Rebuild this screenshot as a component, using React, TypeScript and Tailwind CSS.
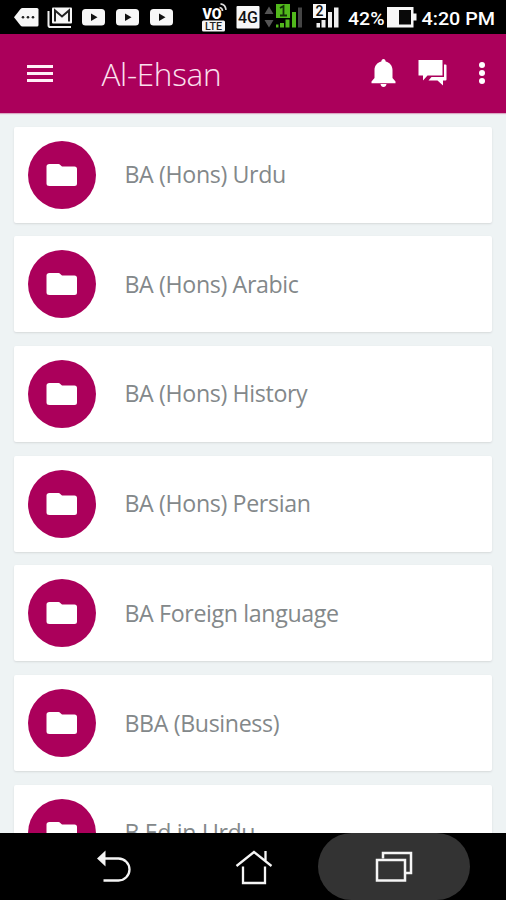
const courses = [
  "BA (Hons) Urdu",
  "BA (Hons) Arabic",
  "BA (Hons) History",
  "BA (Hons) Persian",
  "BA Foreign language",
  "BBA (Business)",
  "B.Ed in Urdu",
];

const VideoIcon = () => (
  <svg className="w-[34px] shrink-0" height="34" viewBox="0 0 34 34">
    <rect x="0" y="9" width="23" height="16.5" rx="3.5" fill="#f7f7f7" />
    <path d="M9 13.5v7.5l6.5-3.75z" fill="#111" />
  </svg>
);

const StatusBar = () => (
  <div className="flex h-[34px] shrink-0 items-center bg-black font-[Roboto,sans-serif] text-white">
    <svg className="ml-[13px] shrink-0" width="26" height="34" viewBox="0 0 26 34">
      <path d="M1 17.2 7.5 9q.8-1 2-1H24q1.500 0 1.500 1.500v15.500q0 1.500-1.500 1.500H9.500q-1.200 0-2-1z" fill="#f7f7f7" />
      <g fill="#222">
        <circle cx="10" cy="17.300" r="1.300" />
        <circle cx="15" cy="17.300" r="1.300" />
        <circle cx="20" cy="17.300" r="1.300" />
      </g>
    </svg>
    <svg className="ml-2 shrink-0" width="26" height="34" viewBox="0 0 26 34" fill="none">
      <path d="M1.500 11v14.200q0 1.800 1.800 1.800H24" stroke="#eee" strokeWidth="2" />
      <rect x="5" y="7.500" width="20" height="16" rx="1" fill="#f7f7f7" />
      <path d="M8 21.500V10.500l7 6 7-6v11" stroke="#222" strokeWidth="2" />
    </svg>
    <div className="ml-[9px] flex">
      <VideoIcon />
      <VideoIcon />
      <VideoIcon />
    </div>
    <svg className="ml-[17px] shrink-0" width="28" height="34" viewBox="0 0 28 34">
      <text x="1.500" y="18.500" fill="#fff" fontSize="14" fontWeight="900" textLength="19" lengthAdjust="spacingAndGlyphs">VO</text>
      <path d="M18.500 7.500q3 .5 3 3.500M19.500 3.800q5 .7 5.500 6" fill="none" stroke="#ddd" strokeWidth="1.700" />
      <rect x="1" y="20.500" width="23" height="11" rx="1.500" fill="#f5f5f5" />
      <text x="4" y="29.700" fill="#222" fontSize="10" fontWeight="500" textLength="17" lengthAdjust="spacingAndGlyphs">LTE</text>
    </svg>
    <svg className="ml-[7px] shrink-0" width="24" height="34" viewBox="0 0 24 34">
      <rect x=".5" y="6" width="23" height="22.500" rx="1" fill="#f7f7f7" />
      <text x="2" y="23" fill="#111" fontSize="16" fontWeight="500" textLength="20" lengthAdjust="spacingAndGlyphs">4G</text>
    </svg>
    <svg className="ml-1 shrink-0" width="40" height="34" viewBox="0 0 40 34">
      <path d="M5 6.500 9.500 14H.5zM5 27.500.5 20h9z" fill="#555" />
      <rect x="12" y="4" width="14" height="14" fill="#52b81c" />
      <path d="M16 8 19.500 6v9.500M16 15.500h7" fill="none" stroke="#142d08" strokeWidth="1.800" />
      <g fill="#52b81c">
        <rect x="16" y="23" width="4" height="4.500" />
        <rect x="21.500" y="19.500" width="4" height="8" />
        <rect x="28" y="12" width="4" height="15.500" />
        <rect x="12" y="24.500" width="2.500" height="3" />
      </g>
      <rect x="34" y="7.500" width="4" height="20" fill="#454545" />
    </svg>
    <svg className="ml-2 shrink-0" width="29" height="34" viewBox="0 0 29 34">
      <rect x="1" y="4" width="13" height="14" fill="#f7f7f7" />
      <text x="3.500" y="16" fill="#111" fontSize="14" fontWeight="500">2</text>
      <g fill="#eee">
        <rect x="4.500" y="23" width="3.500" height="4.500" />
        <rect x="9.500" y="20" width="4" height="7.500" />
        <rect x="16" y="12" width="4" height="15.500" />
        <rect x="22" y="7.500" width="4.500" height="20" />
      </g>
    </svg>
    <svg className="ml-[7px] shrink-0" width="37" height="34" viewBox="0 0 37 34">
      <text x="0" y="24.500" fill="#fff" fontSize="19" fontWeight="500" textLength="36.500" lengthAdjust="spacingAndGlyphs">42%</text>
    </svg>
    <svg className="ml-[2px] shrink-0" width="30" height="34" viewBox="0 0 30 34">
      <path d="M0 7h26.500v6.500H29.500v7h-3V27.500H0z" fill="#f7f7f7" />
      <rect x="12" y="10" width="12" height="14.500" fill="#090909" />
    </svg>
    <svg className="ml-1 shrink-0" width="75" height="34" viewBox="0 0 75 34">
      <text x=".5" y="24.500" fill="#fff" fontSize="19" fontWeight="500" textLength="73.500" lengthAdjust="spacingAndGlyphs">4:20 PM</text>
    </svg>
  </div>
);

const AppBar = () => (
  <header className="z-10 flex h-[78.500px] shrink-0 items-center bg-[#ab005b] text-white shadow-[0_1px_1px_#d9a9c2]">
    <button className="ml-[27px] flex w-[26px] flex-col gap-[4px]" aria-label="Menu">
      <span className="h-[3px] bg-[#fff0f7]" />
      <span className="h-[3px] bg-[#fff0f7]" />
      <span className="h-[3px] bg-[#fff0f7]" />
    </button>
    <h1 className="ml-[48.500px] flex-1 font-['Open_Sans',sans-serif] text-[31.500px] font-light tracking-[-0.300px] whitespace-nowrap text-[#fbe1ee]">
      Al-Ehsan
    </h1>
    <svg width="25" height="30" viewBox="0 0 25 30" fill="#fff">
      <path d="M12.500 1c1.300 0 2 1 2.200 2.500C19 4.500 21.500 8 21.500 12v8l3 3.500v1.700H.5v-1.700l3-3.500v-8c0-4 2.500-7.500 6.800-8.500C10.500 2 11.200 1 12.500 1zM9.500 26h6q-.5 3-3 3t-3-3z" />
    </svg>
    <svg className="ml-[21px]" width="31" height="28" viewBox="0 0 31 28" fill="#fff">
      <path d="M1.500 1h24v15.500H10.500L6 21.500V16.500H1.500z" />
      <path d="M27 5.500h1.500q1 0 1 1v14q0 1-1 1h-2.500v5L20.500 21.500h-9l3-3.500H27z" />
    </svg>
    <svg className="mr-5 ml-[30px]" width="8" height="26" viewBox="0 0 8 26" fill="#fff">
      <circle cx="4" cy="5" r="3" />
      <circle cx="4" cy="13" r="3" />
      <circle cx="4" cy="21" r="3" />
    </svg>
  </header>
);

const CourseCard = ({ title }: { title: string }) => (
  <li className="flex h-[96px] shrink-0 items-center rounded-[2px] bg-white pl-[14px] shadow-[0_1px_2px_#d5d9da]">
    <div className="flex size-[68px] items-center justify-center rounded-full bg-[#ab005b]">
      <svg width="32" height="24" viewBox="0 0 32 24" fill="#fff">
        <path d="M3.500 1H12.500q1 0 1.800 1l1.700 1.500H28.500q2.500 0 2.500 2.500v14.500q0 2.500-2.500 2.500H3.500Q.5 23 .5 20.500v-17Q.5 1 3.500 1z" />
      </svg>
    </div>
    <span className="ml-[28.500px] text-[23.200px] tracking-[-0.360px] whitespace-nowrap text-[#83888a]">{title}</span>
  </li>
);

const NavigationBar = () => (
  <nav className="flex h-[67px] shrink-0 items-center bg-black">
    <svg className="ml-[97px]" width="36" height="34" viewBox="0 0 36 34" fill="none">
      <path d="M0 8.500 8.500 .5v16z" fill="#f5f5f5" />
      <path d="M8 8.500h13.500a11 11 0 0 1 0 22H6.500" stroke="#f5f5f5" strokeWidth="2.300" />
    </svg>
    <svg className="ml-[102px]" width="38" height="36" viewBox="0 0 38 36" fill="none" stroke="#f5f5f5" strokeWidth="2.300">
      <path d="M1.500 17 19 3l17.500 14M8 17.500V34h22V17.500M30.500 2v10" />
    </svg>
    <div className="ml-[45px] flex h-[67px] w-[152px] items-center justify-center rounded-[34px] bg-[#333]">
      <svg width="38" height="34" viewBox="0 0 38 34" fill="none" stroke="#f5f5f5" strokeWidth="2.500">
        <path d="M8 8.500V3h28v20h-5.500" />
        <rect x="2" y="10" width="28" height="20.500" />
      </svg>
    </div>
  </nav>
);

export default function App() {
  return (
    <div className="flex h-[900px] w-[506px] flex-col overflow-hidden bg-[#eef3f4]">
      <StatusBar />
      <AppBar />
      <main className="min-h-0 flex-1 overflow-hidden px-[14px] pt-[14px] font-['Open_Sans',sans-serif]">
        <ul className="flex flex-col gap-[13.700px]">
          {courses.map((course) => (
            <CourseCard key={course} title={course} />
          ))}
        </ul>
      </main>
      <NavigationBar />
    </div>
  );
}
